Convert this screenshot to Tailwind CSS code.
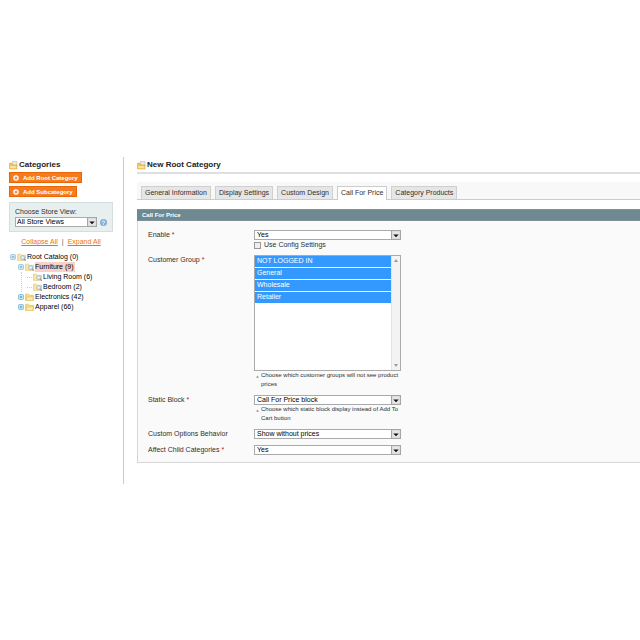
<!DOCTYPE html>
<html lang="en">
<head>
    <meta charset="UTF-8">
    <title>New Root Category | Manage Categories</title>
    <script src="https://cdn.jsdelivr.net/npm/@tailwindcss/browser@4"></script>
</head>
<body class="bg-white pt-[157px] font-['Liberation_Sans',Arial,sans-serif] text-[7px] leading-[10px] text-[#2f2f2f]">

    <!-- Shared icons -->
    <svg class="hidden">
        <symbol id="box" viewBox="0 0 16 16">
            <path d="M6 1h8v9H6z" fill="#eeeae0" stroke="#b9b2a4"/>
            <path d="M1 4h4l1 3h8v7H1z" fill="#f3c95c" stroke="#cf9a35"/>
            <path d="M2 9h11v4H2z" fill="#fbe39a"/>
        </symbol>
        <symbol id="folder" viewBox="0 0 16 14">
            <path d="M1 2h5l2 2h7v9H1z" fill="#f9dc84" stroke="#d9b04f"/>
            <path d="M3 7h12l-1 6H2z" fill="#fdedb0" stroke="#e2bc5d"/>
        </symbol>
        <symbol id="folder-view" viewBox="0 0 16 14">
            <path d="M1 2h5l2 2h7v9H1z" fill="#fbe7a6" stroke="#d9bc6d"/>
            <circle cx="10" cy="8" r="3.5" fill="#e4f1fa" stroke="#8fb0c8" stroke-width="1.4"/>
            <path d="M12.5 10.5l3 3" stroke="#8496a5" stroke-width="2"/>
        </symbol>
        <symbol id="toggle" viewBox="0 0 10 10">
            <rect x="1" y="1" width="8" height="8" rx="1" fill="#d5edf7" stroke="#6fb2d0" stroke-width="1.4"/>
            <path d="M3 5h4M5 3v4" stroke="#3f8fb5" stroke-width="1.2"/>
        </symbol>
        <symbol id="toggle-open" viewBox="0 0 10 10">
            <rect x="1" y="1" width="8" height="8" rx="1" fill="#d5edf7" stroke="#8cc4dc" stroke-width="1.4"/>
            <path d="M3 5h4" stroke="#3f8fb5" stroke-width="1.4"/>
        </symbol>
        <symbol id="plus" viewBox="0 0 12 12">
            <circle cx="6" cy="6" r="5.5" fill="#fff"/>
            <path d="M6 3v6M3 6h6" stroke="#ef7417" stroke-width="2"/>
        </symbol>
        <symbol id="arrow" viewBox="0 0 9 9">
            <rect x=".5" y=".5" width="8" height="8" fill="#e6e6e6" stroke="#a5a5a5"/>
            <path d="M2 4h5L4.500 6.500z" fill="#111"/>
        </symbol>
    </svg>

    <div class="flex">

        <!-- Sidebar -->
        <aside class="w-[124px] shrink-0 min-h-[327px] border-r border-[#ccc] pl-[9px] pr-[10px] pt-[2px]">
            <h2 class="flex items-center gap-[1px] text-[8px] leading-[12px] font-bold text-[#222]">
                <svg class="size-[9px]"><use href="#box"/></svg>Categories
            </h2>
            <button class="mt-[1px] flex h-[11px] items-center gap-1 border border-[#ed6502] bg-[#f47c20] px-[3px] text-[6px] font-bold text-white">
                <svg class="size-[6px]"><use href="#plus"/></svg>Add Root Category
            </button>
            <button class="mt-[3px] flex h-[11px] items-center gap-1 border border-[#ed6502] bg-[#f47c20] px-[3px] text-[6px] font-bold text-white">
                <svg class="size-[6px]"><use href="#plus"/></svg>Add Subcategory
            </button>

            <div class="mt-[5px] border border-[#d4dfe0] bg-[#e7efef] px-[5px] pt-[4px] pb-[4px]">
                <label for="store" class="block">Choose Store View:</label>
                <div class="flex items-center gap-[3px]">
                    <div class="relative w-[84px]">
                        <select id="store" class="block h-[10px] w-full appearance-none border border-[#aaa] bg-white pl-[1px] text-[7px] leading-[8px] text-black">
                            <option>All Store Views</option>
                        </select>
                        <svg class="pointer-events-none absolute top-0 right-0 size-[10px]"><use href="#arrow"/></svg>
                    </div>
                    <a href="#" aria-label="Help">
                        <svg class="size-[7px]" viewBox="0 0 14 14">
                            <circle cx="7" cy="7" r="6.500" fill="#8fb6d8" stroke="#6d97bd"/>
                            <path d="M5 5.500a2 2 0 1 1 2.500 2L7 9M7 10v1.500" fill="none" stroke="#fff" stroke-width="1.500"/>
                        </svg>
                    </a>
                </div>
            </div>

            <div class="mt-[5px] flex justify-center gap-1 text-[#ea7601]">
                <a href="#" class="underline">Collapse All</a>
                <span class="text-[#555]">|</span>
                <a href="#" class="underline">Expand All</a>
            </div>

            <!-- Category tree -->
            <ul class="mt-[5px] pl-[1px] whitespace-nowrap text-black">
                <li>
                    <div class="flex items-center gap-[1px]">
                        <svg class="size-[6px]"><use href="#toggle-open"/></svg>
                        <svg class="h-[8px] w-[9px]"><use href="#folder-view"/></svg>
                        <a href="#">Root Catalog (0)</a>
                    </div>
                    <ul class="pl-[8px]">
                        <li>
                            <div class="flex items-center gap-[1px]">
                                <svg class="size-[6px]"><use href="#toggle-open"/></svg>
                                <svg class="h-[8px] w-[9px]"><use href="#folder-view"/></svg>
                                <a href="#" class="bg-[#fad1c3] pr-[1px]">Furniture (9)</a>
                            </div>
                            <ul class="ml-[3px] border-l border-dotted border-[#ccc] pl-[5px]">
                                <li class="flex items-center gap-[1px]">
                                    <span class="w-[5px] border-t border-dotted border-[#ccc]"></span>
                                    <svg class="h-[8px] w-[9px]"><use href="#folder-view"/></svg>
                                    <a href="#">Living Room (6)</a>
                                </li>
                                <li class="flex items-center gap-[1px]">
                                    <span class="w-[5px] border-t border-dotted border-[#ccc]"></span>
                                    <svg class="h-[8px] w-[9px]"><use href="#folder-view"/></svg>
                                    <a href="#">Bedroom (2)</a>
                                </li>
                            </ul>
                        </li>
                        <li class="flex items-center gap-[1px]">
                            <svg class="size-[6px]"><use href="#toggle"/></svg>
                            <svg class="h-[8px] w-[9px]"><use href="#folder"/></svg>
                            <a href="#">Electronics (42)</a>
                        </li>
                        <li class="flex items-center gap-[1px]">
                            <svg class="size-[6px]"><use href="#toggle"/></svg>
                            <svg class="h-[8px] w-[9px]"><use href="#folder"/></svg>
                            <a href="#">Apparel (66)</a>
                        </li>
                    </ul>
                </li>
            </ul>
        </aside>

        <!-- Main column -->
        <main class="min-w-0 flex-1 pl-[13px] pt-[2px]">
            <h1 class="flex items-center gap-[1px] border-b-2 border-[#dfdfdf] pb-[1px] text-[8px] leading-[12px] font-bold text-[#222]">
                <svg class="size-[9px]"><use href="#box"/></svg>New Root Category
            </h1>

            <nav class="mt-[8px] flex items-end gap-[4px] border-b border-[#ccc] bg-[#f8f8f8] pt-[4px] pl-[4px]">
                <a href="#" class="border border-b-0 border-[#d0d0d0] bg-[#e6e6e6] px-[3px] pt-[1px] pb-[1px]">General Information</a>
                <a href="#" class="border border-b-0 border-[#d0d0d0] bg-[#e6e6e6] px-[3px] pt-[1px] pb-[1px]">Display Settings</a>
                <a href="#" class="border border-b-0 border-[#d0d0d0] bg-[#e6e6e6] px-[3px] pt-[1px] pb-[1px]">Custom Design</a>
                <a href="#" class="-mb-[1px] border border-b-0 border-[#ccc] bg-white px-[3px] pt-[1px] pb-[2px]">Call For Price</a>
                <a href="#" class="border border-b-0 border-[#d0d0d0] bg-[#e6e6e6] px-[3px] pt-[1px] pb-[1px]">Category Products</a>
            </nav>

            <h3 class="mt-[9px] border-y border-[#7f9097] bg-[#6f8992] pl-[5px] text-[6px] font-bold text-white">Call For Price</h3>
            <form class="grid grid-cols-[106px_147px] border-b border-l border-[#d6d6d6] bg-[#fafafa] pt-[9px] pb-[7px] pl-[10px]">
                <label for="enable">Enable <span class="text-[#d40707]">*</span></label>
                <div>
                    <div class="relative">
                        <select id="enable" class="block h-[10px] w-full appearance-none border border-[#aaa] bg-white pl-[2px] text-[7px] leading-[8px] text-black">
                            <option>Yes</option>
                            <option>No</option>
                        </select>
                        <svg class="pointer-events-none absolute top-0 right-0 size-[10px]"><use href="#arrow"/></svg>
                    </div>
                    <div class="flex items-center gap-[3px]">
                        <input id="config" type="checkbox" class="size-[7px] appearance-none border border-[#999] bg-[#eee] checked:bg-[#39f]">
                        <label for="config">Use Config Settings</label>
                    </div>
                </div>

                <label for="group" class="mt-[5px]">Customer Group <span class="text-[#d40707]">*</span></label>
                <div class="mt-[5px]">
                    <div class="flex h-[116px] border border-[#aaa] bg-white">
                        <select id="group" multiple class="min-w-0 flex-1 overflow-hidden bg-white text-[7px] text-black">
                            <option selected class="mb-px h-[11px] min-h-0 p-0 pt-[1px] pl-[2px] checked:bg-[#39f] checked:bg-linear-to-b checked:from-[#39f] checked:to-[#39f] checked:text-white">NOT LOGGED IN</option>
                            <option selected class="mb-px h-[11px] min-h-0 p-0 pt-[1px] pl-[2px] checked:bg-[#39f] checked:bg-linear-to-b checked:from-[#39f] checked:to-[#39f] checked:text-white">General</option>
                            <option selected class="mb-px h-[11px] min-h-0 p-0 pt-[1px] pl-[2px] checked:bg-[#39f] checked:bg-linear-to-b checked:from-[#39f] checked:to-[#39f] checked:text-white">Wholesale</option>
                            <option selected class="h-[11px] min-h-0 p-0 pt-[1px] pl-[2px] checked:bg-[#39f] checked:bg-linear-to-b checked:from-[#39f] checked:to-[#39f] checked:text-white">Retailer</option>
                        </select>
                        <div class="flex w-[9px] flex-col items-center justify-between border-l border-[#e4e4e4] bg-[#f3f3f3] py-[3px]">
                            <svg class="h-[3px] w-[4px]" viewBox="0 0 4 3"><path d="M0 3h4L2 0z" fill="#999"/></svg>
                            <svg class="h-[3px] w-[4px]" viewBox="0 0 4 3"><path d="M0 0h4L2 3z" fill="#999"/></svg>
                        </div>
                    </div>
                    <p class="flex gap-[2px] pl-[2px] text-[6px] leading-[9px]">
                        <svg class="mt-[4px] h-[3px] w-[3px] shrink-0" viewBox="0 0 4 3"><path d="M0 3h4L2 0z" fill="#999"/></svg>
                        <span>Choose which customer groups will not see product prices</span>
                    </p>
                </div>

                <label for="block" class="mt-[6px]">Static Block <span class="text-[#d40707]">*</span></label>
                <div class="mt-[6px]">
                    <div class="relative">
                        <select id="block" class="block h-[10px] w-full appearance-none border border-[#aaa] bg-white pl-[2px] text-[7px] leading-[8px] text-black">
                            <option>Call For Price block</option>
                        </select>
                        <svg class="pointer-events-none absolute top-0 right-0 size-[10px]"><use href="#arrow"/></svg>
                    </div>
                    <p class="flex gap-[2px] pl-[2px] text-[6px] leading-[9px]">
                        <svg class="mt-[4px] h-[3px] w-[3px] shrink-0" viewBox="0 0 4 3"><path d="M0 3h4L2 0z" fill="#999"/></svg>
                        <span>Choose which static block display instead of Add To Cart button</span>
                    </p>
                </div>

                <label for="options" class="mt-[6px]">Custom Options Behavior</label>
                <div class="relative mt-[6px]">
                    <select id="options" class="block h-[10px] w-full appearance-none border border-[#aaa] bg-white pl-[2px] text-[7px] leading-[8px] text-black">
                        <option>Show without prices</option>
                    </select>
                    <svg class="pointer-events-none absolute top-0 right-0 size-[10px]"><use href="#arrow"/></svg>
                </div>

                <label for="child" class="mt-[6px]">Affect Child Categories <span class="text-[#d40707]">*</span></label>
                <div class="relative mt-[6px]">
                    <select id="child" class="block h-[10px] w-full appearance-none border border-[#aaa] bg-white pl-[2px] text-[7px] leading-[8px] text-black">
                        <option>Yes</option>
                        <option>No</option>
                    </select>
                    <svg class="pointer-events-none absolute top-0 right-0 size-[10px]"><use href="#arrow"/></svg>
                </div>
            </form>
        </main>
    </div>

</body>
</html>
